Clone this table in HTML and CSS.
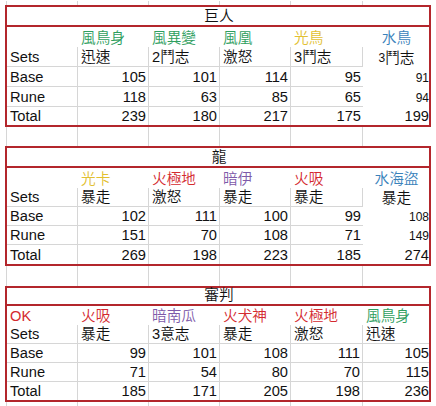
FILE: index.html
```html
<!DOCTYPE html>
<html lang="zh-Hant">
<head>
<meta charset="utf-8">
<title>Sets</title>
<link rel="stylesheet" href="styles.css">
</head>
<body>
<div class="sheet">
  <div class="strip h5"><i></i><i></i><i></i><i></i><i></i><i></i><i></i></div>

  <section class="tbl t1">
    <div class="title">巨人</div>
    <div class="c"></div>
    <div class="c green">風鳥身</div>
    <div class="c green">風異變</div>
    <div class="c green">風凰</div>
    <div class="c yellow">光鳥</div>
    <div class="c blue ctr">水鳥</div>

    <div class="c gl">Sets</div>
    <div class="c gl">迅速</div>
    <div class="c gl">2鬥志</div>
    <div class="c gl">激怒</div>
    <div class="c gl">3鬥志</div>
    <div class="c ctr"><span class="sm">3</span>鬥志</div>

    <div class="c gl">Base</div>
    <div class="c gl r">105</div>
    <div class="c gl r">101</div>
    <div class="c gl r">114</div>
    <div class="c glb r">95</div>
    <div class="c r last sm">91</div>

    <div class="c gl">Rune</div>
    <div class="c gl r">118</div>
    <div class="c gl r">63</div>
    <div class="c gl r">85</div>
    <div class="c glb r">65</div>
    <div class="c r last sm">94</div>

    <div class="c gv">Total</div>
    <div class="c gv r">239</div>
    <div class="c gv r">180</div>
    <div class="c gv r">217</div>
    <div class="c r">175</div>
    <div class="c r last">199</div>
  </section>

  <div class="strip h19"><i></i><i></i><i></i><i></i><i></i><i></i><i></i></div>

  <section class="tbl t2">
    <div class="title">龍</div>
    <div class="c"></div>
    <div class="c yellow">光卡</div>
    <div class="c red">火極地</div>
    <div class="c purple">暗伊</div>
    <div class="c red">火吸</div>
    <div class="c blue ctr">水海盜</div>

    <div class="c gl">Sets</div>
    <div class="c gl">暴走</div>
    <div class="c gl">激怒</div>
    <div class="c gl">暴走</div>
    <div class="c gl">暴走</div>
    <div class="c ctr">暴走</div>

    <div class="c gl">Base</div>
    <div class="c gl r">102</div>
    <div class="c gl r">111</div>
    <div class="c gl r">100</div>
    <div class="c glb r">99</div>
    <div class="c r last sm">108</div>

    <div class="c gl">Rune</div>
    <div class="c gl r">151</div>
    <div class="c gl r">70</div>
    <div class="c gl r">108</div>
    <div class="c glb r">71</div>
    <div class="c r last sm">149</div>

    <div class="c gv">Total</div>
    <div class="c gv r">269</div>
    <div class="c gv r">198</div>
    <div class="c gv r">223</div>
    <div class="c r">185</div>
    <div class="c r last">274</div>
  </section>

  <div class="strip h20"><i></i><i></i><i></i><i></i><i></i><i></i><i></i></div>

  <section class="tbl t3">
    <div class="title">審判</div>
    <div class="c red">OK</div>
    <div class="c red">火吸</div>
    <div class="c purple">暗南瓜</div>
    <div class="c red">火犬神</div>
    <div class="c red">火極地</div>
    <div class="c green">風鳥身</div>

    <div class="c gl">Sets</div>
    <div class="c gl">暴走</div>
    <div class="c gl">3意志</div>
    <div class="c gl">暴走</div>
    <div class="c gl">激怒</div>
    <div class="c glh">迅速</div>

    <div class="c gl">Base</div>
    <div class="c gl r">99</div>
    <div class="c gl r">101</div>
    <div class="c gl r">108</div>
    <div class="c gl r">111</div>
    <div class="c glh r last">105</div>

    <div class="c gl">Rune</div>
    <div class="c gl r">71</div>
    <div class="c gl r">54</div>
    <div class="c gl r">80</div>
    <div class="c gl r">70</div>
    <div class="c glh r last">115</div>

    <div class="c gv">Total</div>
    <div class="c gv r">185</div>
    <div class="c gv r">171</div>
    <div class="c gv r">205</div>
    <div class="c gv r">198</div>
    <div class="c r last">236</div>
  </section>

  <div class="strip h10"><i></i><i></i><i></i><i></i><i></i><i></i><i></i></div>
</div>
</body>
</html>
```

FILE: styles.css
```css
* { box-sizing: border-box; }

html, body {
  margin: 0;
  padding: 0;
  background: #ffffff;
}

body {
  width: 436px;
  height: 406px;
  overflow: hidden;
  font-family: "Liberation Sans", "Noto Sans CJK TC", sans-serif;
  font-size: 14.67px;
  font-weight: 350;
  color: #111111;
}

.sheet {
  display: flex;
  flex-direction: column;
}

/* spreadsheet background strips with vertical gridlines */
.strip {
  display: grid;
  grid-template-columns: 6px 71px 71px 71px 71px 72px 72px 1fr;
}
.strip i { border-left: 1px solid #d6d6d6; }
.strip i:first-child { border-left: none; }
.h5 { height: 5px; border-top: 1px solid transparent; }
.h19 { height: 19px; }
.h20 { height: 20px; }
.h10 { height: 10px; }

/* bordered tables */
.tbl {
  display: grid;
  grid-template-columns: 71px 71px 71px 71px 72px 66px;
  width: 426px;
  margin-left: 5px;
  border: 2px solid #b3262c;
  background: #ffffff;
}
.t1 { grid-template-rows: 20px 20px 20px 20px 20px 18px; }
.t2 { grid-template-rows: 20px 20px 19px 19px 19px 19px; }
.t3 { grid-template-rows: 18px 19px 19px 19px 19px 18px; }

.title {
  grid-column: 1 / -1;
  border-bottom: 2px solid #b3262c;
  display: flex;
  align-items: flex-end;
  justify-content: center;
  line-height: 17px;
  padding-left: 2px;
}

.c {
  display: flex;
  align-items: flex-end;
  padding: 0 2px 0 3px;
  line-height: 17px;
  white-space: nowrap;
  overflow: hidden;
}
.r { justify-content: flex-end; }
.ctr { justify-content: center; }
.last { padding-right: 0; }
.sm { font-size: 12px; }

/* visible gridlines */
.gl  { border-right: 1px solid #d6d6d6; border-bottom: 1px solid #d6d6d6; }
.glb { border-bottom: 1px solid #d6d6d6; }
.glh { border-bottom: 1px solid #d6d6d6; }
.gv  { border-right: 1px solid #d6d6d6; }

/* name colours */
.green  { color: #2e9e5e; }
.yellow { color: #e2c030; }
.blue   { color: #3a82bb; }
.red    { color: #d42a2f; }
.purple { color: #7e5aa9; }
```
